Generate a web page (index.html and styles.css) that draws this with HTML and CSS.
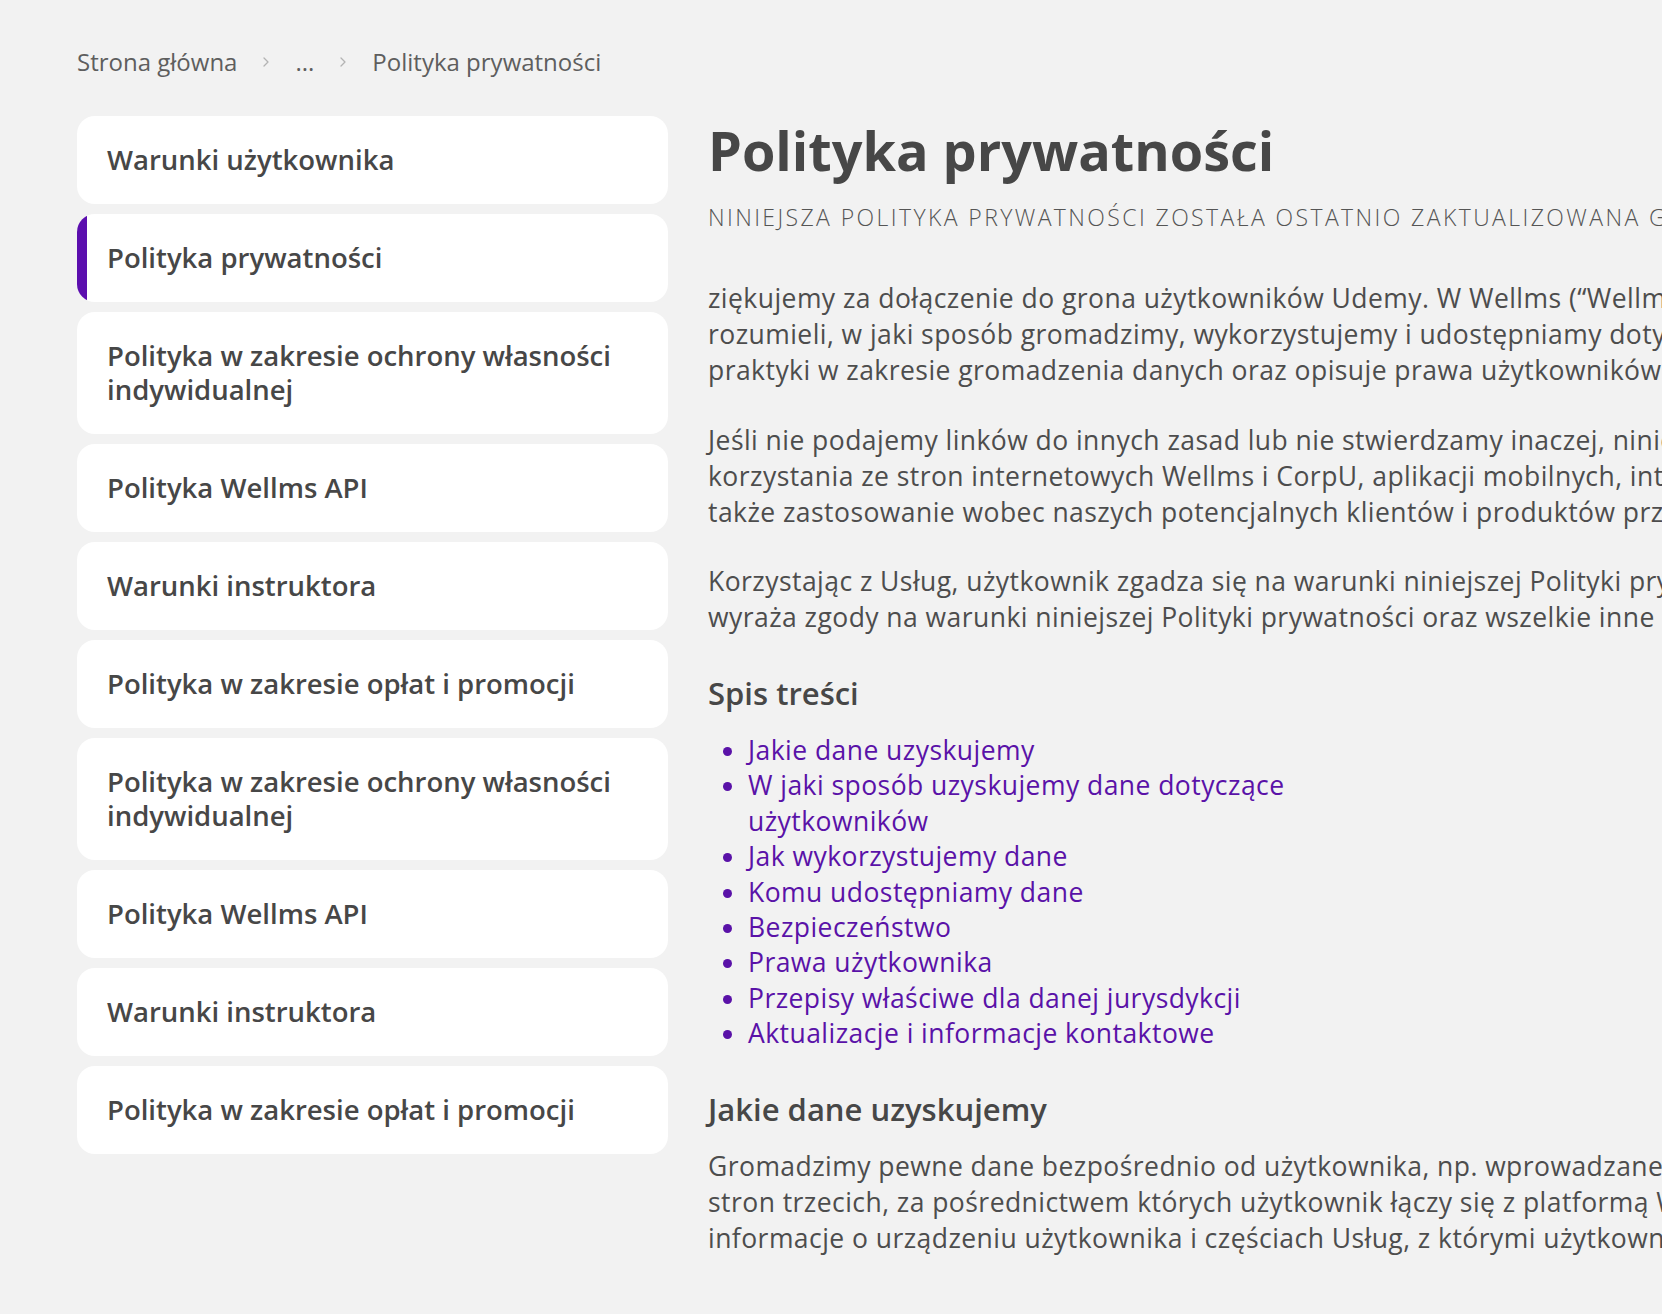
FILE: index.html
```html
<!DOCTYPE html>
<html lang="pl">
<head>
<meta charset="utf-8">
<title>Polityka prywatności</title>
<link rel="stylesheet" href="styles.css">
</head>
<body>
<div class="page">
  <nav class="breadcrumb">
    <a class="crumb" href="#">Strona główna</a>
    <svg class="chev" viewBox="0 0 8 12" width="8" height="12"><path d="M2 2l4 4-4 4" fill="none" stroke="#b3b3b3" stroke-width="1.3" stroke-linecap="round" stroke-linejoin="round"/></svg>
    <span class="crumb">...</span>
    <svg class="chev" viewBox="0 0 8 12" width="8" height="12"><path d="M2 2l4 4-4 4" fill="none" stroke="#b3b3b3" stroke-width="1.3" stroke-linecap="round" stroke-linejoin="round"/></svg>
    <span class="crumb current">Polityka prywatności</span>
  </nav>

  <div class="layout">
    <aside class="sidebar">
      <a class="card" href="#">Warunki użytkownika</a>
      <a class="card active" href="#">Polityka prywatności</a>
      <a class="card" href="#">Polityka w zakresie ochrony własności indywidualnej</a>
      <a class="card" href="#">Polityka Wellms API</a>
      <a class="card" href="#">Warunki instruktora</a>
      <a class="card" href="#">Polityka w zakresie opłat i promocji</a>
      <a class="card" href="#">Polityka w zakresie ochrony własności indywidualnej</a>
      <a class="card" href="#">Polityka Wellms API</a>
      <a class="card" href="#">Warunki instruktora</a>
      <a class="card" href="#">Polityka w zakresie opłat i promocji</a>
    </aside>

    <main class="content">
      <h1 class="title">Polityka prywatności</h1>
      <p class="subtitle">Niniejsza Polityka prywatności została ostatnio zaktualizowana grudnia 2023 r.</p>

      <p class="para">
        <span class="line">ziękujemy za dołączenie do grona użytkowników Udemy. W Wellms (“Wellms”, „my”, „nas”) zależy nam na tym, aby użytkownicy</span>
        <span class="line">rozumieli, w jaki sposób gromadzimy, wykorzystujemy i udostępniamy dotyczące ich dane. Niniejsza Polityka prywatności obejmuje nasze</span>
        <span class="line">praktyki w zakresie gromadzenia danych oraz opisuje prawa użytkowników w zakresie dostępu do ich danych.</span>
      </p>
      <p class="para">
        <span class="line">Jeśli nie podajemy linków do innych zasad lub nie stwierdzamy inaczej, niniejsza Polityka prywatności ma zastosowanie w przypadku</span>
        <span class="line">korzystania ze stron internetowych Wellms i CorpU, aplikacji mobilnych, interfejsów API lub powiązanych usług. Ma ona</span>
        <span class="line">także zastosowanie wobec naszych potencjalnych klientów i produktów przedsiębiorstw.</span>
      </p>
      <p class="para">
        <span class="line">Korzystając z Usług, użytkownik zgadza się na warunki niniejszej Polityki prywatności. Użytkownik nie powinien korzystać z Usług, jeśli nie</span>
        <span class="line">wyraża zgody na warunki niniejszej Polityki prywatności oraz wszelkie inne umowy regulujące korzystanie z Usług.</span>
      </p>

      <h2 class="section-title">Spis treści</h2>
      <ul class="toc">
        <li><a href="#">Jakie dane uzyskujemy</a></li>
        <li><a href="#">W jaki sposób uzyskujemy dane dotyczące użytkowników</a></li>
        <li><a href="#">Jak wykorzystujemy dane</a></li>
        <li><a href="#">Komu udostępniamy dane</a></li>
        <li><a href="#">Bezpieczeństwo</a></li>
        <li><a href="#">Prawa użytkownika</a></li>
        <li><a href="#">Przepisy właściwe dla danej jurysdykcji</a></li>
        <li><a href="#">Aktualizacje i informacje kontaktowe</a></li>
      </ul>

      <h2 class="section-title section-gap">Jakie dane uzyskujemy</h2>
      <p class="para para-after">
        <span class="line">Gromadzimy pewne dane bezpośrednio od użytkownika, np. wprowadzane przez niego informacje, dane dotyczące jego treści oraz dane z platform</span>
        <span class="line">stron trzecich, za pośrednictwem których użytkownik łączy się z platformą Wellms. Gromadzimy również pewne dane automatycznie, np.</span>
        <span class="line">informacje o urządzeniu użytkownika i częściach Usług, z którymi użytkownik wchodzi w interakcję lub z których korzysta.</span>
      </p>
    </main>
  </div>
</div>
</body>
</html>
```

FILE: styles.css
```css
html, body {
  margin: 0;
  padding: 0;
}

body {
  background: #f2f2f2;
  font-family: "Open Sans", "Noto Sans", sans-serif;
  color: #4a4a4a;
  overflow: hidden;
}

a {
  text-decoration: none;
  color: inherit;
}

.page {
  padding: 46px 0 0 77px;
}

/* Breadcrumb */
.breadcrumb {
  display: flex;
  align-items: center;
  gap: 25px;
  font-size: 24px;
  line-height: 32px;
  color: #5e5e5e;
  margin-bottom: 38px;
}

.chev {
  display: block;
  flex: none;
}

/* Layout */
.layout {
  display: flex;
  gap: 40px;
  align-items: flex-start;
}

.sidebar {
  width: 591px;
  flex: none;
  display: flex;
  flex-direction: column;
  gap: 10px;
}

.card {
  display: block;
  position: relative;
  overflow: hidden;
  background: #ffffff;
  border-radius: 18px;
  padding: 27px 30px;
  font-size: 27.5px;
  font-weight: 600;
  line-height: 34px;
  color: #474747;
}

.card.active::before {
  content: "";
  position: absolute;
  left: 0;
  top: 0;
  bottom: 0;
  width: 10px;
  background: #5b0eae;
}

/* Content */
.content {
  flex: 1;
  min-width: 0;
}

.title {
  margin: 0;
  font-size: 54px;
  font-weight: 700;
  line-height: 68px;
  color: #474747;
  white-space: nowrap;
}

.subtitle {
  margin: 18px 0 0;
  font-size: 23px;
  font-weight: 300;
  letter-spacing: 2.4px;
  line-height: 30px;
  text-transform: uppercase;
  color: #555555;
  white-space: nowrap;
}

.para {
  margin: 48px 0 0;
  font-size: 26.5px;
  letter-spacing: 0.45px;
  line-height: 36px;
  color: #4d4d4d;
}

.para + .para {
  margin-top: 33.5px;
}

.line {
  display: block;
  white-space: nowrap;
}

.section-title {
  margin: 38px 0 0;
  font-size: 31px;
  font-weight: 600;
  line-height: 40px;
  color: #474747;
}

.section-gap {
  margin-top: 37px;
}

.toc {
  margin: 20px 0 0;
  padding-left: 40px;
  max-width: 640px;
  font-size: 26.5px;
  letter-spacing: 0.45px;
  line-height: 35.4px;
  color: #5a12a8;
}

.para.para-after {
  margin-top: 19px;
}
```
